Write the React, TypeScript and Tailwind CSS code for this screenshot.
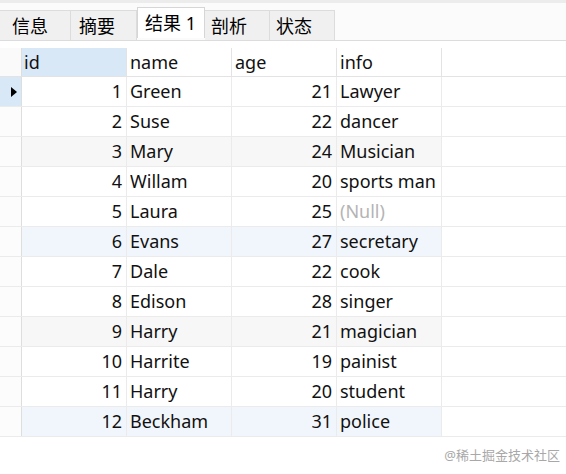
import React from "react";

const rows: [number, string, number, string | null][] = [
  [1, "Green", 21, "Lawyer"],
  [2, "Suse", 22, "dancer"],
  [3, "Mary", 24, "Musician"],
  [4, "Willam", 20, "sports man"],
  [5, "Laura", 25, null],
  [6, "Evans", 27, "secretary"],
  [7, "Dale", 22, "cook"],
  [8, "Edison", 28, "singer"],
  [9, "Harry", 21, "magician"],
  [10, "Harrite", 19, "painist"],
  [11, "Harry", 20, "student"],
  [12, "Beckham", 31, "police"],
];

const tabs = ["信息", "摘要", "结果 1", "剖析", "状态"];

function rowBg(i: number) {
  if (i === 2 || i === 8) return "bg-[#f7f7f7]";
  if (i === 5 || i === 11) return "bg-[#f1f6fc]";
  return "bg-white";
}

export default function App() {
  return (
    <div
      className="w-[566px] h-[474px] bg-white relative overflow-hidden text-[#111]"
      style={{ fontFamily: '"Noto Sans", "Noto Sans CJK SC", sans-serif' }}
    >
      <div className="h-[3px] bg-[#ececec]" />
      {/* tab bar */}
      <div className="flex h-[38px] pt-[7px] border-b border-[#dcdcdc] bg-[#fbfbfb]">
        {tabs.map((t, i) =>
          i === 2 ? (
            <div
              key={t}
              className="w-[68px] h-[31px] -mt-[3px] bg-white border-l border-r border-t border-[#d6d6d6] flex items-center pl-[7px] text-[18px] leading-none text-black"
            >
              {t}
            </div>
          ) : (
            <div
              key={t}
              className={`h-[30px] border-t border-r border-[#dcdcdc] bg-[#f0f0f0] flex items-center text-[18px] leading-none text-black ${
                i === 0 ? "w-[71px] pl-[12px]" : i === 1 ? "w-[66px] pl-[8px]" : "w-[65px] pl-[6px]"
              }`}
            >
              {t}
            </div>
          )
        )}
      </div>
      {/* grid */}
      <div className="mt-[7px] flex flex-col text-[18px] leading-none">
        <div className="flex h-[29px] border-b border-[#e3e3e3]">
          <div className="w-[22px] border-r border-[#dedede] bg-[#fafafa]" />
          <div className="w-[105px] border-r border-[#e3e3e3] bg-[#d9e8f7] flex items-center pl-[2px] pb-[1px]">id</div>
          <div className="w-[105px] border-r border-[#e3e3e3] flex items-center pl-[3px] pb-[1px]">name</div>
          <div className="w-[105px] border-r border-[#e3e3e3] flex items-center pl-[3px] pb-[1px]">age</div>
          <div className="w-[105px] border-r border-[#e3e3e3] flex items-center pl-[3px] pb-[1px]">info</div>
        </div>
        {rows.map(([id, name, age, info], i) => (
          <div key={id} className="flex h-[30px] border-b border-[#ebebeb]">
            <div
              className={`w-[22px] border-r border-[#dedede] flex items-center justify-center ${
                i === 0 ? "bg-[#d9e8f7]" : "bg-[#fcfcfc]"
              }`}
            >
              {i === 0 && (
                <svg width="8" height="10" viewBox="0 0 8 10" className="ml-[6px]">
                  <polygon points="1,0 7,5 1,10" fill="#000" />
                </svg>
              )}
            </div>
            <div className={`w-[105px] border-r border-[#ebebeb] flex items-center justify-end pr-[4px] pb-[2px] ${rowBg(i)}`}>{id}</div>
            <div className={`w-[105px] border-r border-[#ebebeb] flex items-center pl-[3px] pb-[2px] ${rowBg(i)}`}>{name}</div>
            <div className={`w-[105px] border-r border-[#ebebeb] flex items-center justify-end pr-[4px] pb-[2px] ${rowBg(i)}`}>{age}</div>
            <div className={`w-[105px] border-r border-[#ebebeb] flex items-center pl-[3px] pb-[2px] whitespace-nowrap ${rowBg(i)}`}>
              {info === null ? <span className="text-[#b4b4b4]">(Null)</span> : info}
            </div>
          </div>
        ))}
      </div>
      <div className="absolute right-[6px] bottom-[12px] text-[13px] text-[#a8a8a8] leading-none">
        @稀土掘金技术社区
      </div>
    </div>
  );
}
